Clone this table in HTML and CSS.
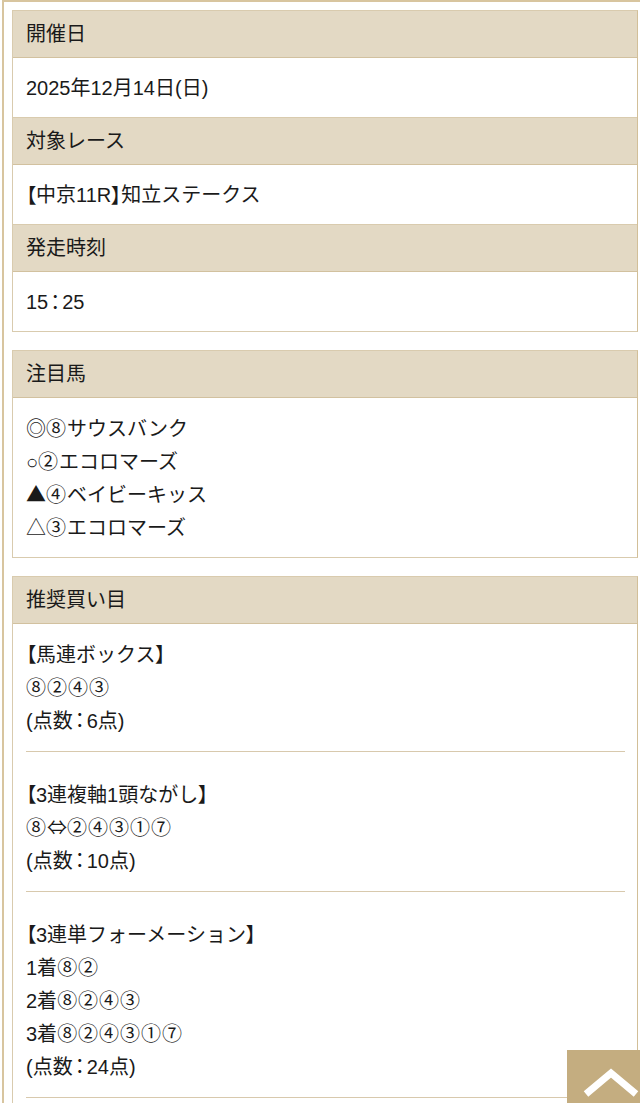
FILE: index.html
```html
<!DOCTYPE html>
<html lang="ja">
<head>
<meta charset="utf-8">
<title>予想</title>
<link rel="stylesheet" href="styles.css">
</head>
<body>
<div class="wrap">
  <section class="box">
    <div class="head">開催日</div>
    <div class="row">2025年12月14日(日)</div>
    <div class="head">対象レース</div>
    <div class="row"><span class="pw">【</span>中京11R<span class="pw">】</span>知立ステークス</div>
    <div class="head">発走時刻</div>
    <div class="row last">15<span class="pw colon">：</span>25</div>
  </section>

  <section class="box">
    <div class="head">注目馬</div>
    <div class="body marks">
      <p><span class="sym">◎</span><span class="num">⑧</span>サウスバンク</p>
      <p>○<span class="num">②</span>エコロマーズ</p>
      <p><span class="sym">▲</span><span class="num">④</span>ベイビーキッス</p>
      <p><span class="sym">△</span><span class="num">③</span>エコロマーズ</p>
    </div>
  </section>

  <section class="box">
    <div class="head">推奨買い目</div>
    <div class="body bets">
      <div class="group">
        <p><span class="pw">【</span>馬連ボックス<span class="pw">】</span></p>
        <p><span class="num">⑧②④③</span></p>
        <p>(点数<span class="pw colon">：</span>6点)</p>
      </div>
      <div class="group">
        <p><span class="pw">【</span>3連複軸1頭ながし<span class="pw">】</span></p>
        <p><span class="num">⑧</span><span class="sym">⇔</span><span class="num">②④③①⑦</span></p>
        <p>(点数<span class="pw colon">：</span>10点)</p>
      </div>
      <div class="group">
        <p><span class="pw">【</span>3連単フォーメーション<span class="pw">】</span></p>
        <p>1着<span class="num">⑧②</span></p>
        <p>2着<span class="num">⑧②④③</span></p>
        <p>3着<span class="num">⑧②④③①⑦</span></p>
        <p>(点数<span class="pw colon">：</span>24点)</p>
      </div>
    </div>
  </section>
</div>

<a class="totop" href="#" aria-label="ページトップへ">
  <svg width="56" height="30" viewBox="0 0 56 30"><polyline points="3,26 28,5 53,26" fill="none" stroke="#fff" stroke-width="7" stroke-linejoin="miter"/></svg>
</a>
</body>
</html>
```

FILE: styles.css
```css
html, body {
  margin: 0;
  padding: 0;
  background: #fff;
}
body {
  font-family: "Liberation Sans", "Noto Sans CJK JP", sans-serif;
  font-size: 20px;
  color: #1a1a1a;
}
.pw {
  font-family: "Noto Sans CJK JP", sans-serif;
  font-feature-settings: "palt";
  line-height: 1;
}
.colon {
  margin: 0 2px;
}
.sym,
.num {
  font-family: "Noto Sans CJK JP", sans-serif;
  line-height: 1;
}
.num {
  letter-spacing: 1px;
}
.wrap {
  margin-left: 2px;
  border-left: 2px solid #d8c59f;
  border-top: 2px solid #d8c59f;
  padding: 8px 2px 40px 8px;
  display: flex;
  flex-direction: column;
  gap: 18px;
}
.box {
  border: 1px solid #d9cbae;
  border-right-color: #d2bf98;
  background: #fff;
}
.head {
  background: #e3d9c4;
  height: 46px;
  border-bottom: 1px solid #d2c19f;
  display: flex;
  align-items: center;
  padding: 0 13px;
  line-height: 1;
}
.row {
  height: 59px;
  border-bottom: 1px solid #d9cbae;
  display: flex;
  align-items: center;
  padding: 0 13px;
  line-height: 1;
  white-space: pre;
}
.row.last {
  border-bottom: none;
}
.body {
  padding: 0 12px 0 13px;
}
.body p {
  margin: 0;
  line-height: 33px;
  height: 33px;
  white-space: nowrap;
}
.marks {
  padding-top: 15px;
  padding-bottom: 12px;
}
.bets {
  padding-top: 15px;
}
.group {
  padding-bottom: 13px;
  border-bottom: 1px solid #d8c9ad;
  margin-bottom: 27px;
}
.totop {
  position: fixed;
  right: 0;
  bottom: -20px;
  width: 73px;
  height: 73px;
  background: #c4ad80;
  display: flex;
  justify-content: center;
  align-items: flex-start;
  padding-top: 18px;
  box-sizing: border-box;
}
.totop svg {
  display: block;
  margin-left: 14px;
}
```
